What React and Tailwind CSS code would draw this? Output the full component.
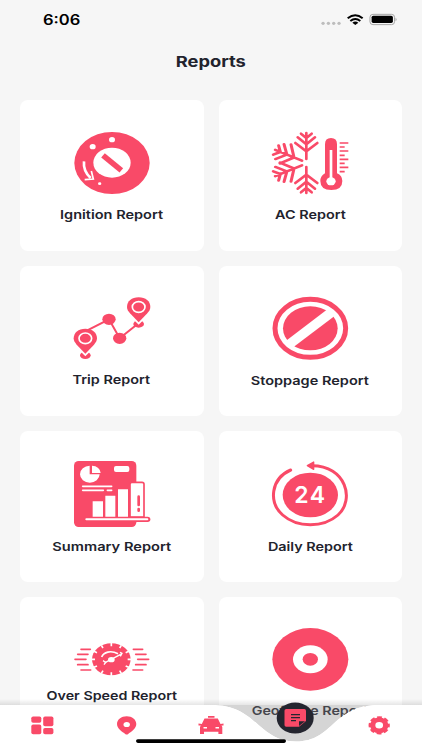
const PINK = "#f94a68";

function IgnitionIcon() {
  return (
    <svg viewBox="35 30 240 198" className="h-[66px] w-20">
      <ellipse cx="155" cy="129" rx="113" ry="93" fill={PINK} />
      <ellipse cx="155" cy="128" rx="56" ry="45" fill="#fff" />
      <path d="M128 106 L183 151" stroke={PINK} strokeWidth="17" />
      <ellipse cx="155" cy="59" rx="9" ry="8" fill="#fff" />
      <ellipse cx="97" cy="80" rx="9" ry="8" fill="#fff" />
      <ellipse cx="118" cy="191" rx="5" ry="4" fill="#fff" />
      <path d="M71 124 Q68 153 91 174" fill="none" stroke="#fff" strokeWidth="8" />
      <path d="M73 179 L99 177 L93 153" fill="none" stroke="#fff" strokeWidth="5" />
    </svg>
  );
}

function SnowArm() {
  return <path d="M0 -12 V-90 M-16 -88 L0 -75 L16 -88 M-26 -77 L0 -56 L26 -77 M-33 -60 L0 -35 L33 -60" />;
}

function AcIcon() {
  return (
    <svg viewBox="30 30 240 198" className="h-[66px] w-20" fill="none" stroke={PINK} strokeWidth="8">
      <g strokeLinecap="round">
        <g transform="translate(139 129)">
          <SnowArm />
        </g>
        <g transform="translate(139 129) scale(1 -1)">
          <SnowArm />
        </g>
        <g transform="translate(138 127) scale(1.14 0.95) rotate(-64)">
          <SnowArm />
        </g>
        <g transform="translate(138 131) scale(1.14 0.95) rotate(-116)">
          <SnowArm />
        </g>
      </g>
      <path
        d="M195 73 Q195 54 213 54 Q231 54 231 73 V160 Q247 167 247 183 Q247 210 214 210 Q181 210 181 183 Q181 168 195 160Z"
        fill={PINK}
        stroke="none"
      />
      <path d="M213 90 V174" stroke="#fff" />
      <ellipse cx="213" cy="184" rx="14" ry="12" fill="#fff" stroke="none" />
      <path d="M239 69 H265 M239 93 H265 M239 118 H265 M239 142 H265" strokeWidth="5" />
      <path d="M239 81 H254 M239 106 H254 M239 130 H254 M239 155 H254" strokeWidth="5" />
    </svg>
  );
}

function MapPin({ x, y }) {
  return (
    <g transform={`translate(${x} ${y})`}>
      <ellipse cx="0" cy="51" rx="16" ry="11" fill={PINK} />
      <path d="M-14 36 L0 50 L14 36" fill="#fff" stroke="#fff" strokeWidth="5" />
      <path d="M0 -29 C21 -29 35 -17 35 0 C35 8 31 13 26 19 L0 46 L-26 19 C-31 13 -35 8 -35 0 C-35 -17 -21 -29 0 -29Z" fill={PINK} />
      <ellipse rx="19" ry="16" fill={PINK} stroke="#fff" strokeWidth="5" />
    </g>
  );
}

function TripIcon() {
  return (
    <svg viewBox="35 33 240 198" className="h-[66px] w-20">
      <path d="M75 139 L146 103 L178 160 L228 120" fill="none" stroke={PINK} strokeWidth="6" />
      <ellipse cx="146" cy="103" rx="20" ry="17" fill={PINK} />
      <ellipse cx="178" cy="160" rx="20" ry="17" fill={PINK} />
      <MapPin x={75} y={160} />
      <MapPin x={235} y={66} />
    </svg>
  );
}

function StoppageIcon() {
  return (
    <svg viewBox="90 33 240 198" className="h-[66px] w-20">
      <ellipse cx="211" cy="130" rx="106" ry="87" fill="#fff" stroke={PINK} strokeWidth="15" />
      <ellipse cx="211" cy="130" rx="82" ry="66" fill={PINK} />
      <path d="M145 180 L277 80" stroke="#fff" strokeWidth="29" />
    </svg>
  );
}

function SummaryIcon() {
  return (
    <svg viewBox="80 30 240 207" className="h-[69px] w-20">
      <rect x="86" y="33" width="187" height="198" rx="14" fill={PINK} />
      <path d="M133 47 V73 H163 A29.5 25.5 0 1 1 133 47Z" fill="#fff" />
      <path d="M140 47 A27 22 0 0 1 166 69 H140Z" fill="#fff" />
      <rect x="206" y="48" width="46" height="18" rx="6" fill="#fff" />
      <g stroke="#fff" strokeWidth="5" strokeLinecap="round">
        <path d="M112 109 H199 M112 121 H174 M186 121 H199" />
      </g>
      <path d="M142 154 H173 V201 H142Z M180 137 H210 V201 H180Z M218 118 H248 V201 H218Z" fill="#fff" />
      <path d="M254 201 V103 Q254 97 260 97 H290 Q296 97 296 103 V201Z" fill="#fff" stroke={PINK} strokeWidth="5" />
      <path d="M280 140 V165 M280 177 V182" stroke={PINK} strokeWidth="8" strokeLinecap="round" />
      <path d="M121 208 H307" stroke={PINK} strokeWidth="16" strokeLinecap="round" />
      <path d="M123 208 H306" stroke="#fff" strokeWidth="6" strokeLinecap="round" />
    </svg>
  );
}

function DailyIcon() {
  return (
    <svg viewBox="30 30 240 207" className="h-[69px] w-20" fill="none">
      <ellipse cx="151" cy="135" rx="83" ry="67" fill={PINK} />
      <path
        d="M92 60 C32 86 25 157 68 195 C112 234 190 234 234 195 C285 149 258 47 156 47"
        stroke={PINK}
        strokeWidth="9"
        strokeLinecap="round"
      />
      <path d="M142 47 L161 36 V58Z" fill={PINK} stroke={PINK} strokeWidth="4" strokeLinejoin="round" />
      <text
        x="103"
        y="160"
        textLength="96"
        lengthAdjust="spacingAndGlyphs"
        fill="#fff"
        className="font-['Inter',sans-serif] text-[69px] font-semibold tracking-[4px]"
      >
        24
      </text>
    </svg>
  );
}

function SpeedLines() {
  return <path d="M122 88 H150 M112 103 H143 M104 118 H137 M112 134 H143 M122 150 H151" />;
}

function SpeedIcon() {
  return (
    <svg viewBox="95 66 240 102" className="h-[34px] w-20" fill="none">
      <ellipse cx="213" cy="118" rx="58" ry="48" fill={PINK} />
      <g stroke="#fff" strokeWidth="5">
        <path d="M213 68 V79 M213 157 V168 M153 118 H164 M262 118 H273" />
        <path d="M183 76 L188 84 M161 94 L170 98 M161 142 L170 138 M183 160 L188 152" />
        <path d="M243 76 L238 84 M265 94 L256 98 M265 142 L256 138 M243 160 L238 152" />
      </g>
      <path d="M184 111 C190 96 211 90 233 101" stroke="#fff" strokeWidth="5" />
      <path d="M194 128 L211 119 L241 103 M239 97 L245 100 L240 109" stroke="#fff" strokeWidth="4" />
      <ellipse cx="213" cy="119" rx="10" ry="8" fill="#fff" />
      <path d="M188 122 L196 127 L191 134" stroke="#fff" strokeWidth="4" />
      <g stroke={PINK} strokeWidth="5" strokeLinecap="round">
        <SpeedLines />
        <g transform="translate(429 0) scale(-1 1)">
          <SpeedLines />
        </g>
      </g>
    </svg>
  );
}

function GeofenceIcon() {
  return (
    <svg viewBox="90 36 240 198" className="h-[66px] w-20">
      <ellipse cx="211" cy="133" rx="114" ry="94" fill={PINK} />
      <ellipse cx="211" cy="133" rx="52" ry="42" fill="#fff" />
      <ellipse cx="211" cy="133" rx="23" ry="19" fill={PINK} />
    </svg>
  );
}

const reports = [
  { label: "Ignition Report", Icon: IgnitionIcon, card: "pt-[30px] gap-[11px]", text: "scale-x-[1.21]" },
  { label: "AC Report", Icon: AcIcon, card: "pt-[30px] gap-[11px]", text: "scale-x-[1.2]" },
  { label: "Trip Report", Icon: TripIcon, card: "pt-[30.5px] gap-[10px]", text: "scale-x-[1.2]" },
  { label: "Stoppage Report", Icon: StoppageIcon, card: "pt-[30.5px] gap-[10.5px]", text: "scale-x-[1.21]" },
  { label: "Summary Report", Icon: SummaryIcon, card: "pt-[29px] gap-[10px]", text: "scale-x-[1.22]" },
  { label: "Daily Report", Icon: DailyIcon, card: "pt-[29px] gap-[10px]", text: "scale-x-[1.2]" },
  { label: "Over Speed Report", Icon: SpeedIcon, card: "pt-[45.5px] gap-[12px]", text: "scale-x-[1.19]" },
  { label: "Geofence Report", Icon: GeofenceIcon, card: "pt-[30.5px] gap-[10px]", text: "scale-x-[1.19]" },
];

function StatusBar() {
  return (
    <div className="flex h-10 items-center justify-between pl-[43px] pr-[25px]">
      <span className="origin-left scale-x-[1.18] text-[14px] font-semibold leading-5 text-black">6:06</span>
      <svg viewBox="960 40 232 40" className="h-[13.3px] w-[77.3px]" fill="none">
        <g fill="#bdbdbd">
          <circle cx="969" cy="71" r="5" />
          <circle cx="985" cy="71" r="5" />
          <circle cx="1001" cy="71" r="5" />
          <circle cx="1017" cy="71" r="5" />
        </g>
        <path d="M1043 56 Q1066 37 1088 56 M1051 64 Q1066 52 1081 64" stroke="#000" strokeWidth="6" />
        <path d="M1057 69 Q1066 62 1075 69 L1066 76Z" fill="#000" />
        <rect x="1110" y="44" width="74" height="31" rx="9" stroke="#a5a5a5" strokeWidth="3" />
        <rect x="1115" y="48" width="64" height="22" rx="5" fill="#000" />
        <path d="M1187 54 Q1193 59 1187 65Z" fill="#a5a5a5" />
      </svg>
    </div>
  );
}

function BottomNav() {
  return (
    <nav className="absolute inset-x-0 bottom-0 h-[60px]">
      <svg viewBox="0 0 422 60" className="h-full w-full">
        <defs>
          <linearGradient id="navShadow" x1="0" y1="0" x2="0" y2="1">
            <stop offset="0" stopColor="#000" stopOpacity="0" />
            <stop offset="1" stopColor="#000" stopOpacity="0.1" />
          </linearGradient>
        </defs>
        <rect y="9" width="422" height="6" fill="url(#navShadow)" />
        <path d="M211 15 H379 C332 15 334 51.5 296 51.5 C257 51.5 258 15 211 15Z" fill="#888" fillOpacity="0.35" />
        <path d="M0 15 H211 C258 15 257 51.5 296 51.5 C334 51.5 332 15 379 15 H422 V60 H0Z" fill="#fff" />
        <g fill={PINK}>
          <rect x="31.3" y="26.5" width="10" height="6.3" rx="1.8" />
          <rect x="43.2" y="26.5" width="10.2" height="9.7" rx="1.8" />
          <rect x="31.3" y="34.6" width="10" height="9.7" rx="1.8" />
          <rect x="43.2" y="38" width="10.2" height="6.3" rx="1.8" />
          <path d="M126.7 26.2 C132 26.2 136.3 29.4 136.3 34 C136.3 38.8 130.8 42 128.2 43.9 Q126.7 45 125.2 43.9 C122.6 42 117 38.8 117 34 C117 29.4 121.4 26.2 126.7 26.2Z" />
          <path d="M208 26 H214.5 V27.7 H208Z M204.5 28.5 H217.8 L220.5 34 L223.5 33.6 V35.4 H221.5 L222.3 37 V44 H218.4 V41.7 H204 V44 H200 V37 L200.8 35.4 H198.5 V33.6 L201.8 34Z" />
        </g>
        <ellipse cx="126.7" cy="34.5" rx="3.2" ry="2.6" fill="#fff" />
        <path d="M203.5 37.8 H207 M215.5 37.8 H219" stroke="#fff" strokeWidth="1.5" />
        <ellipse cx="295.2" cy="28" rx="18.5" ry="15.5" fill="#24252f" />
        <path d="M286.2 19 H304.3 Q306 19 306 20.7 V31 L299 36.8 H286.2 Q284.5 36.8 284.5 35 V20.7 Q284.5 19 286.2 19Z" fill={PINK} />
        <path d="M291 24.7 H300 M291 27.7 H300 M291 30.7 H296" stroke="#24252f" strokeWidth="1.3" />
        <path d="M299 36 V31.3 H305Z" fill="#24252f" />
        <g transform="translate(379.2 35.3) scale(1.17 1)">
          <circle r="5.6" fill="none" stroke={PINK} strokeWidth="4.6" />
          <circle
            r="7.8"
            fill="none"
            stroke={PINK}
            strokeWidth="2.6"
            strokeDasharray="4 2.126"
            strokeDashoffset="2"
          />
        </g>
        <rect x="136" y="49.3" width="150" height="3.6" rx="1.8" fill="#000" />
      </svg>
    </nav>
  );
}

export default function App() {
  return (
    <div className="relative h-[750px] w-[422px] overflow-hidden bg-[#f6f6f6] font-['Inter',sans-serif]">
      <StatusBar />
      <header className="flex h-[60px] justify-center pt-3">
        <h1 className="scale-x-[1.22] text-[15px] font-bold leading-5 text-[#22232d]">Reports</h1>
      </header>
      <main className="grid grid-cols-2 gap-[15px] px-5">
        {reports.map(({ label, Icon, card, text }) => (
          <section key={label} className={`flex h-[150.5px] flex-col items-center rounded-lg bg-white ${card}`}>
            <Icon />
            <h2 className={`whitespace-nowrap text-[12px] font-semibold leading-4 text-[#22232d] ${text}`}>{label}</h2>
          </section>
        ))}
      </main>
      <BottomNav />
    </div>
  );
}
